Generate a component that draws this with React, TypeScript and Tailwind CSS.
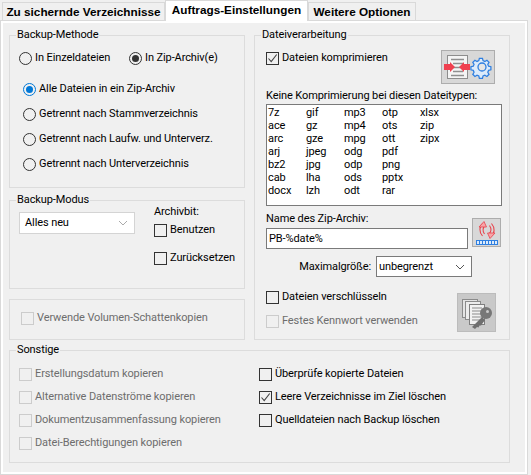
import React from "react";

const Box = ({ checked, disabled }: { checked?: boolean; disabled?: boolean }) => (
  <span className={`w-[13px] h-[13px] border shrink-0 flex items-center justify-center ${disabled ? "border-[#cccccc] bg-[#f0f0f0]" : "border-[#333333] bg-[#f0f0f0]"}`}>
    {checked && (
      <svg width="11" height="11" viewBox="0 0 11 11" fill="none">
        <path d="M1.5 5.5 L4.2 8.6 L9.7 1.5" stroke="#444" strokeWidth="1.1" />
      </svg>
    )}
  </span>
);

const Check = ({ label, checked, disabled, className = "" }: { label: string; checked?: boolean; disabled?: boolean; className?: string }) => (
  <div className={`flex items-center gap-[3px] h-[16px] whitespace-nowrap ${disabled ? "text-[#6d6d6d]" : "text-black"} ${className}`}>
    <Box checked={checked} disabled={disabled} />
    <span>{label}</span>
  </div>
);

const Radio = ({ label, on, blue, className = "" }: { label: string; on?: boolean; blue?: boolean; className?: string }) => (
  <div className={`flex items-center gap-[3px] h-[16px] whitespace-nowrap ${className}`}>
    <span className={`w-[13px] h-[13px] rounded-full border shrink-0 flex items-center justify-center bg-[#f0f0f0] ${blue ? "border-[#0078d7]" : "border-[#333333]"}`}>
      {on && <span className={`w-[7px] h-[7px] rounded-full ${blue ? "bg-[#0078d7]" : "bg-[#333333]"}`} />}
    </span>
    <span>{label}</span>
  </div>
);

const Group = ({ title, className = "", children }: { title?: string; className?: string; children: React.ReactNode }) => (
  <div className={`relative border border-[#dcdcdc] ${className}`}>
    {title && <span className="absolute left-[6px] top-[-9px] px-px bg-[#f0f0f0] leading-[16px]">{title}</span>}
    {children}
  </div>
);

const Chevron = ({ color }: { color: string }) => (
  <svg width="10" height="6" viewBox="0 0 10 6" fill="none">
    <path d="M1 1 L5 5 L9 1" stroke={color} strokeWidth="1" />
  </svg>
);

const Tab = ({ label, active }: { label: string; active?: boolean }) => (
  <div
    className={`border border-[#d9d9d9] border-b-0 font-bold text-[11.75px] tracking-normal font-['Liberation_Sans'] flex items-center justify-center whitespace-nowrap ${
      active ? "bg-white h-[21px] relative z-10 -mb-px pb-[2px]" : "bg-[#f0f0f0] h-[18px]"
    }`}
  >
    {label}
  </div>
);

const files = [
  "7z", "ace", "arc", "arj", "bz2", "cab", "docx",
  "gif", "gz", "gze", "jpeg", "jpg", "lha", "lzh",
  "mp3", "mp4", "mpg", "odg", "odp", "ods", "odt",
  "otp", "ots", "ott", "pdf", "png", "pptx", "rar",
  "xlsx", "zip", "zipx",
];

const CompressIcon = () => (
  <svg width="50" height="30" viewBox="0 0 50 30" fill="none">
    <rect x="4.5" y="3.5" width="20" height="23" fill="#f4f4f4" stroke="#8d8d8d" />
    <path d="M8 7.5h13M10 11.5h10M10 15.5h10M10 19.5h10M8 23.5h13" stroke="#8f8f8f" strokeWidth="1.6" />
    <path d="M1 12h6v-2l5 5-5 5v-2H1z" fill="#f0404f" />
    <path d="M27 12h-6v-2l-5 5 5 5v-2h6z" fill="#f0404f" />
    <path
      d="M37 4h4l.7 3 2.3 1 2.7-1.6 2.7 2.7-1.6 2.7 1 2.3 3 .7v4l-3 .7-1 2.3 1.6 2.7-2.7 2.7-2.7-1.6-2.3 1-.7 3h-4l-.7-3-2.3-1-2.7 1.6-2.7-2.7 1.6-2.7-1-2.3-3-.7v-4l3-.7 1-2.3-1.6-2.7 2.7-2.7 2.7 1.6 2.3-1z"
      transform="translate(7.5 3.2) scale(0.78)"
      fill="#dcebfb"
      stroke="#2f7fe0"
      strokeWidth="1.6"
    />
    <circle cx="39" cy="15" r="4" fill="#e6e6e6" stroke="#2f7fe0" strokeWidth="1.3" />
  </svg>
);

const SyncIcon = () => (
  <svg width="24" height="26" viewBox="0 0 24 26" fill="none">
    <path d="M8 3.5C4 6 4 12 7.5 16" stroke="#e8434c" strokeWidth="1.1" fill="none" />
    <path d="M10 5.5C7.5 8 7.5 11 9.5 14" stroke="#e8434c" strokeWidth="1.1" fill="none" />
    <path d="M4 7 L9 1.5 L11.5 7z" fill="#f7a5a8" stroke="#e8434c" strokeWidth="0.8" />
    <path d="M16 16c4-2.500 4-8.500.5-12.500" stroke="#e8434c" strokeWidth="1.1" fill="none" />
    <path d="M14 14c2.500-2.500 2.500-5.500.5-8.500" stroke="#e8434c" strokeWidth="1.1" fill="none" />
    <path d="M20 13 L15 18.500 L12.500 13z" fill="#f7a5a8" stroke="#e8434c" strokeWidth="0.8" />
    <rect x="1.500" y="20.500" width="21" height="4" fill="#dcebfb" stroke="#2f7fe0" />
    <path d="M4.500 21v3M7.500 21v3M10.500 21v3M13.500 21v3M16.500 21v3M19.500 21v3" stroke="#2f7fe0" />
  </svg>
);

const KeyIcon = () => (
  <svg width="34" height="34" viewBox="0 0 34 34" fill="none">
    <rect x="2.500" y="3.500" width="15" height="18" fill="#e4e4e4" stroke="#8b8b8b" />
    <rect x="5.500" y="5.500" width="15" height="18" fill="#ececec" stroke="#8b8b8b" />
    <rect x="9.500" y="8.500" width="15" height="20" fill="#f2f2f2" stroke="#7f7f7f" />
    <path d="M12 12h10M12 15h10M12 18h10M12 21h10M12 24h10" stroke="#8b8b8b" />
    <circle cx="26" cy="17" r="6" fill="#777" />
    <circle cx="27.500" cy="15.500" r="1.500" fill="#c9c9c9" />
    <path d="M22 21 L12 31 L15 33 L17 31 L18.500 31.500 L19.500 29.500 L21 29.500 L25 24z" fill="#6f6f6f" />
  </svg>
);

export default function App() {
  return (
    <div
      className="w-[531px] h-[475px] bg-[#f0f0f0] text-black text-[11px] tracking-[-0.1px] leading-[16px] overflow-hidden flex flex-col"
      style={{ fontFamily: 'Roboto, "Noto Sans", sans-serif' }}
    >
      <div className="flex items-end h-[20px] pl-[2px]">
        <div className="w-[163px]"><Tab label="Zu sichernde Verzeichnisse" /></div>
        <div className="w-[143px]"><Tab label="Auftrags-Einstellungen" active /></div>
        <div className="w-[108px]"><Tab label="Weitere Optionen" /></div>
      </div>
      <div className="h-[455px] w-[528px] border border-[#d9d9d9] bg-white p-[2px]">
        <div className="h-full bg-[#f0f0f0] pl-[6px] pr-[15px] pt-[12px]">
          <div className="flex gap-[9px]">
            <div className="w-[236px] flex flex-col">
              <Group title="Backup-Methode" className="h-[153px] pl-[9px] pt-[14px]">
                <div className="flex">
                  <Radio label="In Einzeldateien" className="w-[110px]" />
                  <Radio label="In Zip-Archiv(e)" on />
                </div>
                <div className="flex flex-col gap-[9px] pl-[4px] mt-[15px]">
                  <Radio label="Alle Dateien in ein Zip-Archiv" on blue />
                  <Radio label="Getrennt nach Stammverzeichnis" />
                  <Radio label="Getrennt nach Laufw. und Unterverz." />
                  <Radio label="Getrennt nach Unterverzeichnis" />
                </div>
              </Group>
              <Group title="Backup-Modus" className="h-[89px] mt-[12px] pl-[9px] pt-[3px] flex">
                <div className="mt-[8px] w-[116px] h-[22px] bg-white border border-[#d4d4d4] flex items-center justify-between pl-[5px] pr-[6px]">
                  <span>Alles neu</span>
                  <Chevron color="#aaaaaa" />
                </div>
                <div className="ml-[19px]">
                  <div>Archivbit:</div>
                  <Check label="Benutzen" className="mt-[2px]" />
                  <Check label="Zurücksetzen" className="mt-[12px]" />
                </div>
              </Group>
              <Group className="h-[41px] mt-[10px] pl-[11px] pt-[10px]">
                <Check label="Verwende Volumen-Schattenkopien" disabled />
              </Group>
            </div>
            <Group title="Dateiverarbeitung" className="w-[256px] h-[305px] pl-[11px] pr-[8px] pt-[14px]">
              <div className="flex justify-between items-start h-[35px]">
                <Check label="Dateien komprimieren" checked />
                <div className="w-[54px] h-[34px] bg-[#d8d8d8] border border-[#adadad] flex items-center justify-center mr-[6px]">
                  <CompressIcon />
                </div>
              </div>
              <div className="mt-[3px]">Keine Komprimierung bei diesen Dateitypen:</div>
              <div className="w-[236px] h-[102px] bg-white border border-[#7a7a7a] pl-[1px] pt-[1px] grid grid-flow-col grid-cols-[38px_38px_38px_38px_38px] leading-[13px] [grid-template-rows:repeat(7,13px)]">
                {files.map((f) => (
                  <span key={f}>{f}</span>
                ))}
              </div>
              <div className="flex">
                <div className="w-[206px]">
                  <div className="mt-[5px]">Name des Zip-Archiv:</div>
                  <div className="mt-px h-[21px] bg-white border border-[#7a7a7a] flex items-center pl-[2px]">PB-%date%</div>
                </div>
                <div className="ml-[4px] mt-[12px] w-[29px] h-[29px] bg-[#d8d8d8] border border-[#adadad] flex items-center justify-center">
                  <SyncIcon />
                </div>
              </div>
              <div className="flex items-center w-[206px] justify-end gap-[5px] mt-[7px]">
                <span>Maximalgröße:</span>
                <div className="w-[96px] h-[21px] bg-white border border-[#7a7a7a] flex items-center justify-between pl-[2px] pr-[6px]">
                  <span>unbegrenzt</span>
                  <Chevron color="#555555" />
                </div>
              </div>
              <div className="flex justify-between items-start mt-[12px]">
                <div>
                  <Check label="Dateien verschlüsseln" />
                  <Check label="Festes Kennwort verwenden" disabled className="mt-[8px]" />
                </div>
                <div className="w-[39px] h-[39px] bg-[#c9c9c9] border border-[#bcbcbc] flex items-center justify-center mr-[5px] mt-[4px]">
                  <KeyIcon />
                </div>
              </div>
            </Group>
          </div>
          <Group title="Sonstige" className="h-[113px] mt-[10px] pl-[9px] pt-[15px] flex">
            <div className="w-[240px] flex flex-col gap-[7px]">
              <Check label="Erstellungsdatum kopieren" disabled />
              <Check label="Alternative Datenströme kopieren" disabled />
              <Check label="Dokumentzusammenfassung kopieren" disabled />
              <Check label="Datei-Berechtigungen kopieren" disabled />
            </div>
            <div className="flex flex-col gap-[7px]">
              <Check label="Überprüfe kopierte Dateien" />
              <Check label="Leere Verzeichnisse im Ziel löschen" checked />
              <Check label="Quelldateien nach Backup löschen" />
            </div>
          </Group>
        </div>
      </div>
    </div>
  );
}
